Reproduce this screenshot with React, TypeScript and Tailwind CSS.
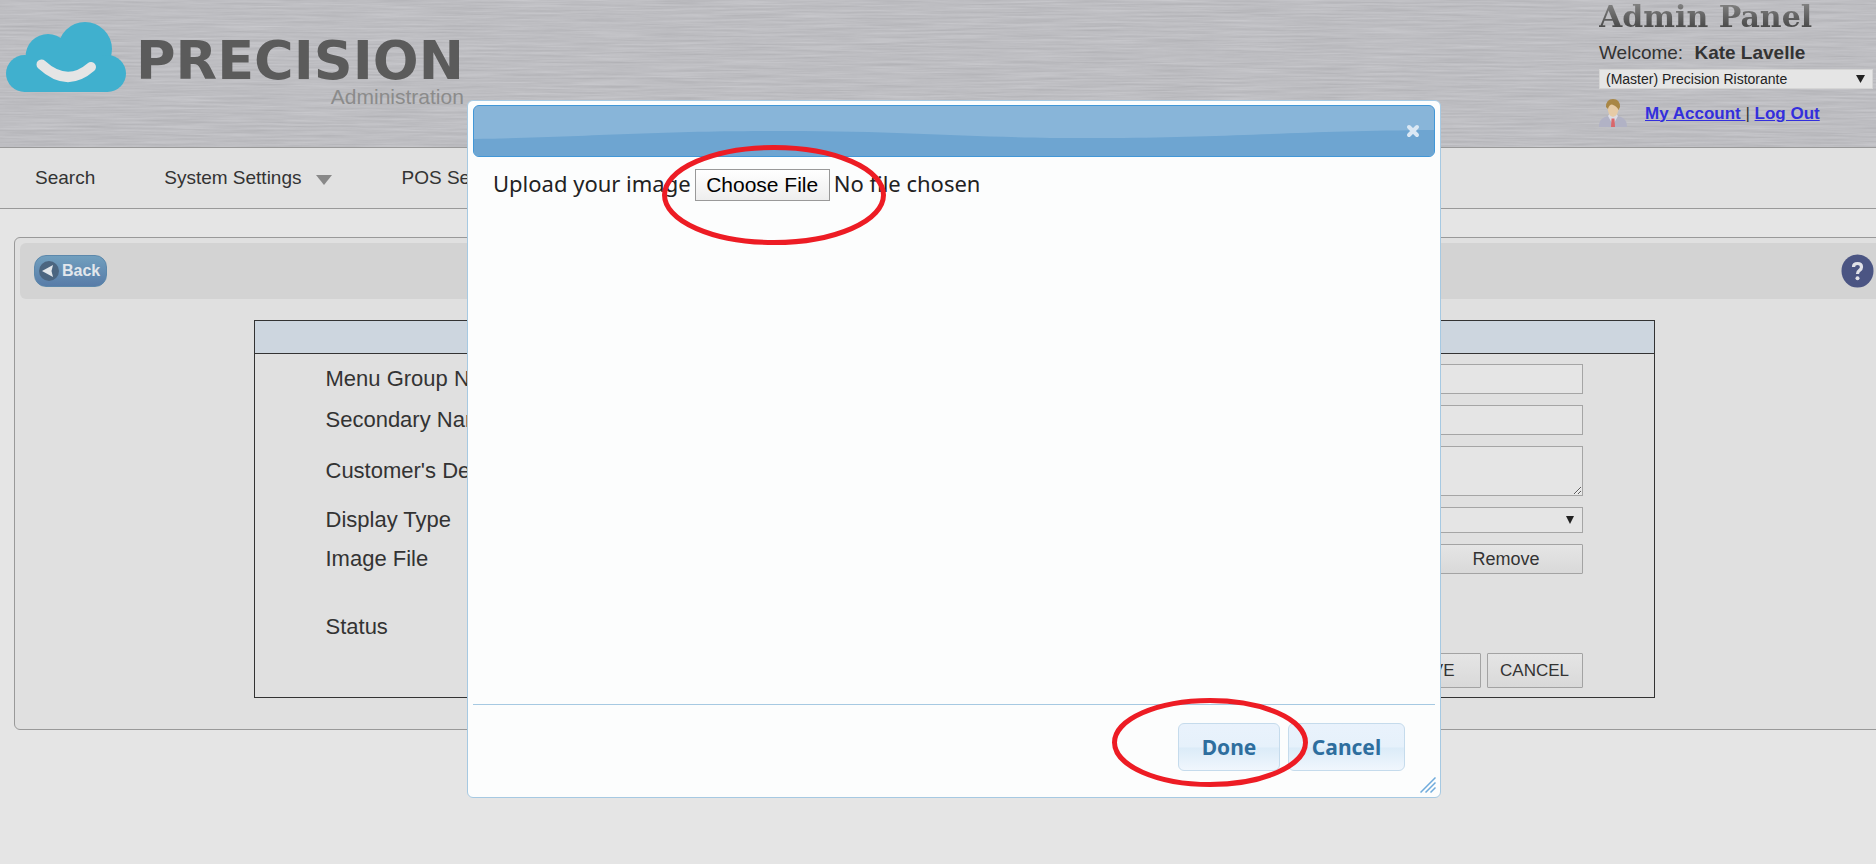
import React, { useState } from 'react';

interface NavItem {
  label: string;
  hasMenu: boolean;
}

const NAV_ITEMS: NavItem[] = [
  { label: 'Search', hasMenu: false },
  { label: 'System Settings', hasMenu: true },
  { label: 'POS Settings', hasMenu: true },
];

function BrushedMetal() {
  return (
    <svg className="absolute inset-0 h-full w-full" aria-hidden="true">
      <filter id="brushed" x="0" y="0" width="100%" height="100%" colorInterpolationFilters="sRGB">
        <feTurbulence type="fractalNoise" baseFrequency="0.014 0.5" numOctaves="4" seed="7" />
        <feColorMatrix
          type="matrix"
          values="0.11 0 0 0 0.688  0.11 0 0 0 0.688  0.11 0 0 0 0.704  0 0 0 0 1"
        />
      </filter>
      <rect width="100%" height="100%" fill="#bcbcc0" />
      <rect width="100%" height="100%" filter="url(#brushed)" />
    </svg>
  );
}

function CloudLogo() {
  return (
    <svg width="120" height="70" viewBox="0 0 120 70" aria-hidden="true">
      <g fill="#40b0ce">
        <circle cx="18.500" cy="51.500" r="18.500" />
        <circle cx="42" cy="34.500" r="22.500" />
        <circle cx="79" cy="27" r="27" />
        <circle cx="101.500" cy="51.500" r="18.500" />
        <rect x="18" y="34" width="84" height="36" />
      </g>
      <path d="M35.500 42.500Q61 66 85 45" fill="none" stroke="#e5e5e5" strokeWidth="10" strokeLinecap="round" />
    </svg>
  );
}

function UserIcon() {
  return (
    <svg width="28" height="29" viewBox="0 0 28 29" aria-hidden="true">
      <path d="M0 28C0 21 3 18.500 10 17L14 20L18 17C25 18.500 28 21 28 28Z" fill="#b1b2c5" />
      <path d="M9 17L14 26L19 17L17 14H11Z" fill="#dcdce4" />
      <path d="M12.500 19.500H15.500L16 28H12Z" fill="#d9676b" />
      <path d="M8.500 7Q8.500 17 14 18Q19.500 17 20 7Q14 2 8.500 7Z" fill="#e6cba6" />
      <path d="M7 8Q7 0 14 0Q21 0 21 8L19.500 11Q18 7 13 5.500Q10 5.500 9 10Z" fill="#a88645" />
    </svg>
  );
}

function Header() {
  return (
    <header className="relative h-[148px] border-b border-[#999] bg-[#bcbcc0]">
      <BrushedMetal />
      <div className="relative flex justify-between">
        <div className="flex gap-[10px] pl-[6px] pt-[22px]">
          <CloudLogo />
          <div className="flex flex-col items-end pt-[13px]">
            <span className="font-['DejaVu_Sans'] text-[54px] font-bold leading-[52px] text-[#5b5b5b]">PRECISION</span>
            <span className="text-[21px] leading-5 text-[#8b8b8b]">Administration</span>
          </div>
        </div>
        <div className="w-[277px] shrink-0 pr-[3px]">
          <h1 className="bg-gradient-to-b from-[#8a8a8a] to-[#3c3c3c] bg-clip-text font-['DejaVu_Serif'] text-[30px] font-bold leading-[34px] text-transparent">
            Admin Panel
          </h1>
          <p className="pt-[7px] text-[19px] leading-6 text-[#333]">
            Welcome: <strong className="pl-[6px]">Kate Lavelle</strong>
          </p>
          <div className="relative mt-1">
            <select
              aria-label="Location"
              className="block h-5 w-full appearance-none border border-[#d5d5d5] bg-[#e5e5e5] pl-[6px] text-sm leading-4 text-[#222]"
            >
              <option>(Master) Precision Ristorante</option>
            </select>
            <svg className="pointer-events-none absolute right-2 top-[6px]" width="9" height="8" aria-hidden="true">
              <path d="M0 0H9L4.500 8Z" fill="#222" />
            </svg>
          </div>
          <div className="flex items-center pt-[10px]">
            <UserIcon />
            <div className="pl-[18px] text-[17px] leading-5 text-[#333]">
              <a href="#account" className="whitespace-pre font-bold text-[#332fdc] underline">{'My Account '}</a>
              {'| '}
              <a href="#logout" className="font-bold text-[#332fdc] underline">Log Out</a>
            </div>
          </div>
        </div>
      </div>
    </header>
  );
}

function NavBar() {
  return (
    <nav className="flex h-[61px] items-center gap-[69px] border-b border-[#999] bg-[#e1e1e1] pl-[35px]">
      {NAV_ITEMS.map((item) => (
        <a key={item.label} href="#menu" className="flex items-center gap-[15px] whitespace-nowrap text-[19px] leading-6 text-[#333]">
          {item.label}
          {item.hasMenu && (
            <svg width="16" height="10" className="mt-1" aria-hidden="true">
              <path d="M0 0H16L8 10Z" fill="#888" />
            </svg>
          )}
        </a>
      ))}
    </nav>
  );
}

function Toolbar() {
  return (
    <div className="flex h-14 items-center justify-between rounded-md bg-[#d3d3d3] px-[14px]">
      <button className="flex h-8 w-[73px] items-center gap-[3px] rounded-xl border border-[#5c88ab] bg-gradient-to-b from-[#719fbe] to-[#587ca8] pl-1 text-base font-bold leading-5 text-[#e2e7ec]">
        <svg width="20" height="20" viewBox="0 0 20 20" aria-hidden="true">
          <circle cx="10" cy="10" r="10" fill="#4b6580" />
          <path d="M3 10L14 4L12.500 10L14 16Z" fill="#e2e6ea" />
        </svg>
        Back
      </button>
      <button aria-label="Help" className="rounded-full">
        <svg width="33" height="34" viewBox="0 0 33 34" aria-hidden="true">
          <ellipse cx="16.500" cy="17" rx="16" ry="16.500" fill="#4b5583" />
          <path d="M12.500 13Q12.500 9.500 16.500 9.500Q20.500 9.500 20.500 13Q20.500 15 18.500 16.300Q16.500 17.600 16.500 20" fill="none" stroke="#e1e2e8" strokeWidth="3.200" />
          <circle cx="16.500" cy="24.300" r="2" fill="#e1e2e8" />
        </svg>
      </button>
    </div>
  );
}

const FIELD = 'block w-full border border-[#a5a5a5] bg-[#e5e5e5] px-2 text-lg text-[#333]';
const BUTTON = 'rounded-[1px] border border-[#a3a3a3] bg-gradient-to-b from-[#e5e5e5] to-[#d9d9d9] text-[#333]';
const ROW = 'grid grid-cols-2 items-center';

function MenuGroupForm() {
  return (
    <form className="mx-auto mt-[21px] w-3/4 border border-[#333]" onSubmit={(e) => e.preventDefault()}>
      <div className="h-[33px] border-b border-[#333] bg-[#cdd6df]" />
      <div className="flex flex-col gap-[11px] px-[71px] pb-[9px] pt-[10px] text-[22px] leading-6 text-[#333]">
        <div className={ROW}>
          <label htmlFor="name">Menu Group Name</label>
          <input id="name" className={`${FIELD} h-[30px]`} />
        </div>
        <div className={ROW}>
          <label htmlFor="secondary">Secondary Name</label>
          <input id="secondary" className={`${FIELD} h-[30px]`} />
        </div>
        <div className={ROW}>
          <label htmlFor="description">Customer's Description</label>
          <textarea id="description" className={`${FIELD} h-[50px]`} />
        </div>
        <div className={ROW}>
          <label htmlFor="display">Display Type</label>
          <div className="relative">
            <select id="display" className={`${FIELD} h-[26px] appearance-none leading-5`} />
            <svg className="pointer-events-none absolute right-[9px] top-[9px]" width="8" height="8" aria-hidden="true">
              <path d="M0 0H8L4 8Z" fill="#222" />
            </svg>
          </div>
        </div>
        <div className="grid h-14 grid-cols-2 items-start">
          <span className="leading-[30px]">Image File</span>
          <div className="flex justify-end gap-[6px]">
            <button type="button" className={`${BUTTON} h-[30px] w-[153px] text-lg leading-6`}>Upload</button>
            <button type="button" className={`${BUTTON} h-[30px] w-[153px] text-lg leading-6`}>Remove</button>
          </div>
        </div>
        <div className={`${ROW} h-[31px]`}>
          <label htmlFor="status">Status</label>
          <input id="status" type="checkbox" className="h-4 w-4" />
        </div>
        <div className="flex justify-end gap-[6px]">
          <button className={`${BUTTON} h-[35px] w-24 text-[17px] leading-6`}>SAVE</button>
          <button type="button" className={`${BUTTON} h-[35px] w-24 text-[17px] leading-6`}>CANCEL</button>
        </div>
      </div>
    </form>
  );
}

interface UploadDialogProps {
  onClose: () => void;
}

const DIALOG_BUTTON =
  "h-12 rounded-md border border-[#c5dbec] bg-[linear-gradient(to_bottom,#e9f2fc_0%,#e6f1fb_50%,#dbebf8_52%,#f0f6fd_100%)] font-['Noto_Sans'] text-[21px] font-bold leading-6 text-[#2e6e9e]";

function UploadDialog({ onClose }: UploadDialogProps) {
  return (
    <div
      role="dialog"
      aria-label="Upload image"
      className="absolute left-[467px] top-[100px] w-[974px] rounded-md border border-[#a6c9e2] bg-[#fcfdfd] px-[5px] py-1 font-['Noto_Sans'] text-[#222]"
    >
      <div className="relative flex h-[52px] items-center justify-end overflow-hidden rounded-md border border-[#4297d7] bg-[#88b5d9] pr-[14px]">
        <svg className="absolute inset-0 h-full w-full" viewBox="0 0 962 50" preserveAspectRatio="none" aria-hidden="true">
          <path d="M0 33C120 31 170 25 310 25C450 25 500 33 640 32C760 31 830 25 962 24V50H0Z" fill="#6ea5d1" />
        </svg>
        <button aria-label="Close" className="relative" onClick={onClose}>
          <svg width="14" height="14" viewBox="0 0 14 14" aria-hidden="true">
            <path d="M3 3L11 11M11 3L3 11" stroke="#dbe8f4" strokeWidth="4" strokeLinecap="round" />
          </svg>
        </button>
      </div>
      <div className="flex h-[547px] items-start gap-1 px-5 pt-[10px] text-[22px] leading-8">
        <label htmlFor="image">Upload your image</label>
        <input
          id="image"
          type="file"
          className="file:mr-1 file:h-8 file:w-[135px] file:border file:border-solid file:border-[#999] file:bg-gradient-to-b file:from-white file:to-[#eee] file:font-['Liberation_Sans'] file:text-[21px] file:leading-7 file:text-black"
        />
      </div>
      <div className="flex justify-end gap-2 border-t border-[#a6c9e2] pb-[22px] pr-[30px] pt-[18px]">
        <button className={`${DIALOG_BUTTON} w-[102px]`} onClick={onClose}>Done</button>
        <button className={`${DIALOG_BUTTON} w-[117px]`} onClick={onClose}>Cancel</button>
      </div>
      <svg className="absolute bottom-1 right-1 cursor-se-resize" width="16" height="16" viewBox="0 0 16 16" aria-hidden="true">
        <path d="M0.500 15.500L15.500 0.500M5.500 15.500L15.500 5.500M10.500 15.500L15.500 10.500" stroke="#6fabdc" strokeWidth="1.500" />
      </svg>
    </div>
  );
}

// Red rings drawn over the steps the reader has to click
function Highlights() {
  return (
    <>
      <svg className="pointer-events-none absolute left-[662px] top-[145px]" width="224" height="100" aria-hidden="true">
        <ellipse cx="112" cy="50" rx="109.500" ry="47.500" fill="none" stroke="#ed1c24" strokeWidth="5" />
      </svg>
      <svg className="pointer-events-none absolute left-[1112px] top-[698px]" width="196" height="89" aria-hidden="true">
        <ellipse cx="98" cy="44.500" rx="95.500" ry="42" fill="none" stroke="#ed1c24" strokeWidth="5" />
      </svg>
    </>
  );
}

export default function App() {
  const [dialogOpen, setDialogOpen] = useState(true);

  return (
    <div className="relative min-h-screen overflow-hidden bg-[#e5e5e5] font-['Liberation_Sans',Arial,sans-serif]">
      <Header />
      <NavBar />
      <main className="ml-[14px] mt-7 w-[calc(100%+4px)] rounded-md border border-[#999] bg-[#e0e0e0] px-[5px] pb-[31px] pt-[5px]">
        <Toolbar />
        <MenuGroupForm />
      </main>
      {dialogOpen && (
        <>
          <UploadDialog onClose={() => setDialogOpen(false)} />
          <Highlights />
        </>
      )}
    </div>
  );
}
